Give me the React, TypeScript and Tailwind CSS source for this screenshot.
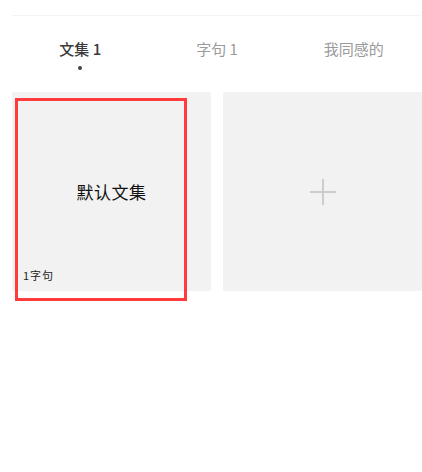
import React from "react";

export default function App() {
  const sans = { fontFamily: '"Noto Sans CJK SC", "Noto Sans", sans-serif' };
  return (
    <div className="relative w-[422px] h-[472px] bg-white overflow-hidden pl-[12px]" style={sans}>
      <div className="h-px mt-[15px] bg-[#f3f3f3] mr-[1px]" />
      <div className="grid grid-cols-3 mt-[22px] h-[21px] items-center">
        <div className="text-center text-[15px] leading-[21px] text-[#3a3a3a] font-medium">文集 1</div>
        <div className="text-center text-[15px] leading-[21px] text-[#9a9a9a]">字句 1</div>
        <div className="text-center text-[15px] leading-[21px] text-[#9a9a9a]">我同感的</div>
      </div>
      <div className="grid grid-cols-3 mt-[7px]">
        <div className="flex justify-center">
          <div className="w-[4px] h-[4px] rounded-full bg-[#444]" />
        </div>
      </div>
      <div className="grid grid-cols-2 gap-[12px] mt-[22px]">
        <div className="relative h-[199px] bg-[#f2f2f2] rounded-[2px] flex items-center justify-center">
          <span className="text-[17px] text-[#111] tracking-[0.5px]">默认文集</span>
          <span className="absolute left-[11px] bottom-[9px] text-[11px] leading-[14px] text-[#222] tracking-[1px]">1字句</span>
        </div>
        <div className="h-[199px] bg-[#f2f2f2] rounded-[2px] flex items-center justify-center">
          <svg width="26" height="26" viewBox="0 0 26 26">
            <path d="M13 0V26M0 13H26" stroke="#cccccc" strokeWidth="2" />
          </svg>
        </div>
      </div>
      <div className="absolute left-[15px] top-[98px] w-[172px] h-[203px] border-[3px] border-[#ff3b3b] pointer-events-none" />
    </div>
  );
}
